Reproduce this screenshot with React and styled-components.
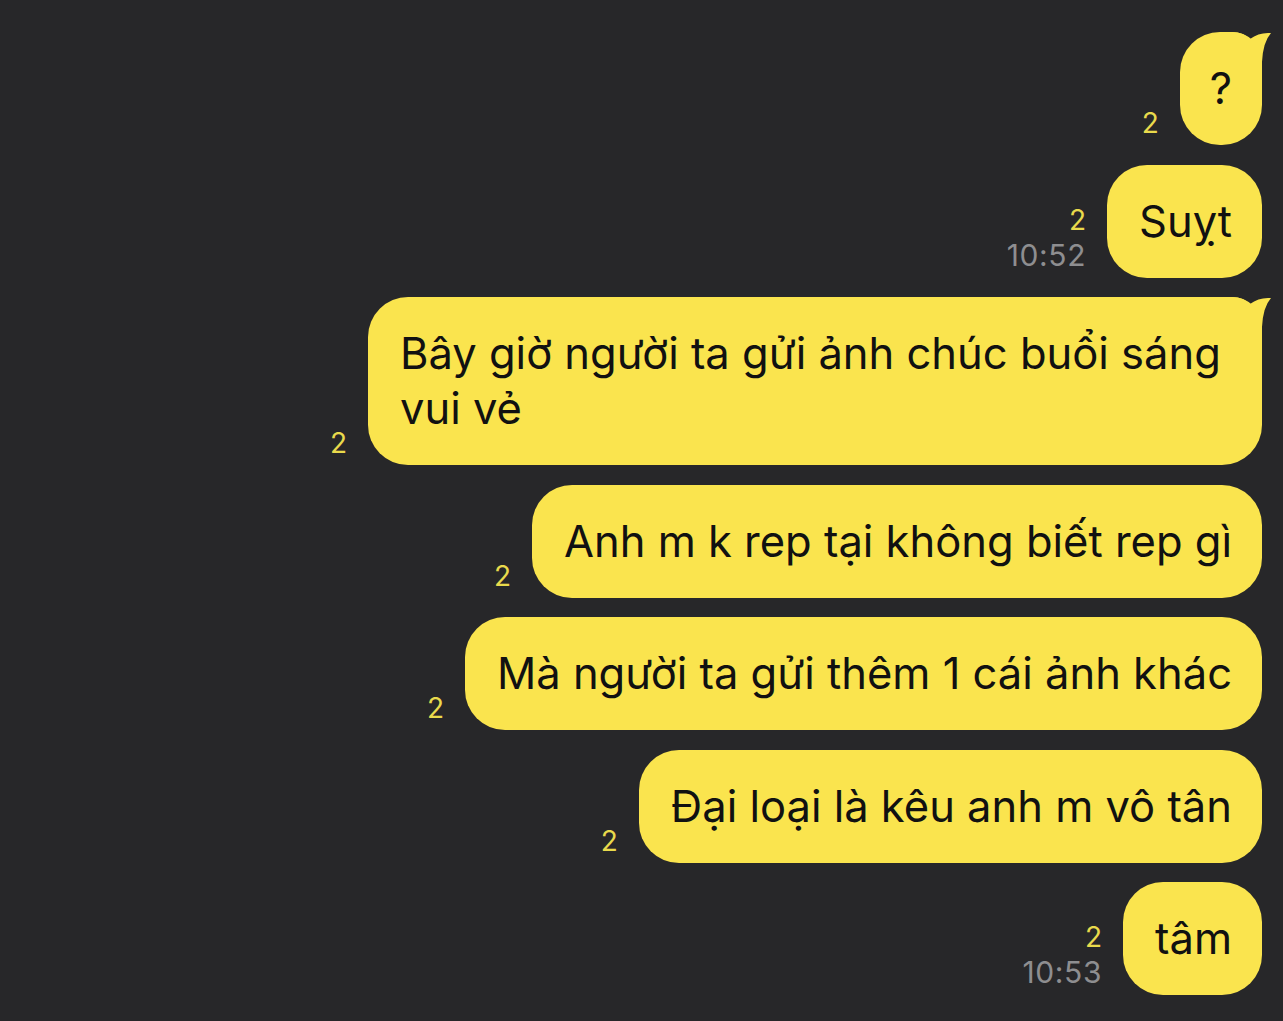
import React from "react";
import styled, { createGlobalStyle } from "styled-components";

const Global = createGlobalStyle`
  html, body { margin: 0; padding: 0; background: #272729; }
  body { font-family: Inter, "Noto Sans", sans-serif; }
`;

const Screen = styled.div`
  width: 1283px;
  height: 1021px;
  overflow: hidden;
  background: #272729;
  display: flex;
  flex-direction: column;
  align-items: flex-end;
  gap: 19.5px;
  padding: 32px 21px 0 0;
  box-sizing: border-box;
`;

const Row = styled.div`
  display: flex;
  align-items: flex-end;
  gap: 21px;
`;

const Meta = styled.div`
  display: flex;
  flex-direction: column;
  align-items: flex-end;
  padding-bottom: 5px;
  font-family: Inter, "Noto Sans", sans-serif;
`;

const Count = styled.span`
  color: #e9da4c;
  font-size: 28px;
  line-height: 34px;
`;

const Time = styled.span`
  color: #8e8e90;
  font-size: 30px;
  line-height: 36px;
  letter-spacing: 0.6px;
`;

const Bubble = styled.div`
  position: relative;
  background: #fae44e;
  color: #111;
  font-family: Inter, "Noto Sans", sans-serif;
  font-size: 43.5px;
  line-height: 55px;
  padding: 29px ${(p) => (p.$narrow ? "30px" : "30px")} 29px ${(p) => (p.$narrow ? "30px" : "32px")};
  border-radius: 40px;
  border-top-right-radius: ${(p) => (p.$tail ? "30px" : "40px")};
  max-width: 832px;
  text-align: ${(p) => (p.$narrow ? "center" : "left")};
  box-sizing: content-box;
`;

const Tail = styled.svg`
  position: absolute;
  top: 0;
  right: -10px;
  width: 40px;
  height: 40px;
  overflow: visible;
`;

const TailShape = () => (
  <Tail viewBox="-30 0 40 40">
    <path
      d="M -30 0 Q -19 0 -12 7 Q -3 0 9 1 Q 1 10 0 30 L 0 40 L -30 40 Z"
      fill="#fae44e"
    />
  </Tail>
);

const messages = [
  { text: "?", tail: true, narrow: true },
  { text: "Suỵt", time: "10:52" },
  { text: "Bây giờ người ta gửi ảnh chúc buổi sáng vui vẻ", tail: true },
  { text: "Anh m k rep tại không biết rep gì" },
  { text: "Mà người ta gửi thêm 1 cái ảnh khác" },
  { text: "Đại loại là kêu anh m vô tân" },
  { text: "tâm", time: "10:53" },
];

export default function App() {
  return (
    <>
      <Global />
      <Screen>
        {messages.map((m, i) => (
          <Row key={i}>
            <Meta>
              <Count>2</Count>
              {m.time && <Time>{m.time}</Time>}
            </Meta>
            <Bubble $tail={m.tail} $narrow={m.narrow}>
              {m.text}
              {m.tail && <TailShape />}
            </Bubble>
          </Row>
        ))}
      </Screen>
    </>
  );
}
